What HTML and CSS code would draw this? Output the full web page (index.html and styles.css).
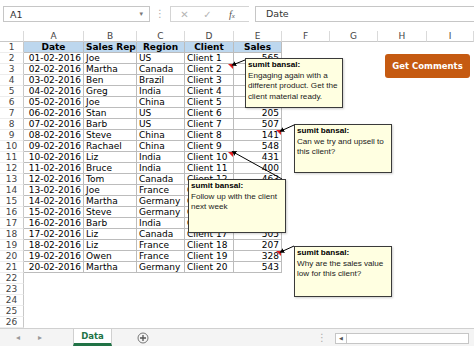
FILE: index.html
```html
<!DOCTYPE html>
<html lang="en">

<head>
    <meta charset="UTF-8">
    <title>Sales Comments</title>
    <link rel="stylesheet" href="styles.css">
</head>

<body>
    <div class="app">
        <!-- Formula bar -->
        <div class="formula-bar">
            <div class="name-box"><span>A1</span><span class="caret">&#9662;</span></div>
            <span class="grip">&#8942;</span>
            <div class="fx-tools">
                <span class="tool">&#10005;</span>
                <span class="tool">&#10003;</span>
                <span class="fx">f<small>x</small></span>
            </div>
            <div class="formula-input">Date</div>
        </div>

        <!-- Sheet grid -->
        <div class="sheet">
            <div class="row head">
                <div class="corner"></div>
                <div class="col">A</div><div class="col">B</div><div class="col">C</div><div class="col">D</div>
                <div class="col">E</div><div class="col">F</div><div class="col">G</div><div class="col">H</div>
                <div class="col">I</div>
            </div>
            <div class="row">
                <div class="rn">1</div>
                <div class="c th">Date</div><div class="c th">Sales Rep</div><div class="c th">Region</div>
                <div class="c th">Client</div><div class="c th">Sales</div>
            </div>
            <div class="row"><div class="rn">2</div><div class="c num">01-02-2016</div><div class="c">Joe</div><div class="c">US</div><div class="c">Client 1</div><div class="c num">565</div></div>
            <div class="row"><div class="rn">3</div><div class="c num">02-02-2016</div><div class="c">Martha</div><div class="c">Canada</div><div class="c note">Client 2</div><div class="c num">320</div></div>
            <div class="row"><div class="rn">4</div><div class="c num">03-02-2016</div><div class="c">Ben</div><div class="c">Brazil</div><div class="c">Client 3</div><div class="c num">478</div></div>
            <div class="row"><div class="rn">5</div><div class="c num">04-02-2016</div><div class="c">Greg</div><div class="c">India</div><div class="c">Client 4</div><div class="c num">390</div></div>
            <div class="row"><div class="rn">6</div><div class="c num">05-02-2016</div><div class="c">Joe</div><div class="c">China</div><div class="c">Client 5</div><div class="c num">512</div></div>
            <div class="row"><div class="rn">7</div><div class="c num">06-02-2016</div><div class="c">Stan</div><div class="c">US</div><div class="c">Client 6</div><div class="c num">205</div></div>
            <div class="row"><div class="rn">8</div><div class="c num">07-02-2016</div><div class="c">Barb</div><div class="c">US</div><div class="c">Client 7</div><div class="c num">507</div></div>
            <div class="row"><div class="rn">9</div><div class="c num">08-02-2016</div><div class="c">Steve</div><div class="c">China</div><div class="c">Client 8</div><div class="c num note">141</div></div>
            <div class="row"><div class="rn">10</div><div class="c num">09-02-2016</div><div class="c">Rachael</div><div class="c">China</div><div class="c">Client 9</div><div class="c num">548</div></div>
            <div class="row"><div class="rn">11</div><div class="c num">10-02-2016</div><div class="c">Liz</div><div class="c">India</div><div class="c note">Client 10</div><div class="c num">431</div></div>
            <div class="row"><div class="rn">12</div><div class="c num">11-02-2016</div><div class="c">Bruce</div><div class="c">India</div><div class="c">Client 11</div><div class="c num">400</div></div>
            <div class="row"><div class="rn">13</div><div class="c num">12-02-2016</div><div class="c">Tom</div><div class="c">Canada</div><div class="c">Client 12</div><div class="c num">463</div></div>
            <div class="row"><div class="rn">14</div><div class="c num">13-02-2016</div><div class="c">Joe</div><div class="c">France</div><div class="c">Client 13</div><div class="c num">288</div></div>
            <div class="row"><div class="rn">15</div><div class="c num">14-02-2016</div><div class="c">Martha</div><div class="c">Germany</div><div class="c">Client 14</div><div class="c num">376</div></div>
            <div class="row"><div class="rn">16</div><div class="c num">15-02-2016</div><div class="c">Steve</div><div class="c">Germany</div><div class="c">Client 15</div><div class="c num">419</div></div>
            <div class="row"><div class="rn">17</div><div class="c num">16-02-2016</div><div class="c">Barb</div><div class="c">India</div><div class="c">Client 16</div><div class="c num">352</div></div>
            <div class="row"><div class="rn">18</div><div class="c num">17-02-2016</div><div class="c">Liz</div><div class="c">Canada</div><div class="c">Client 17</div><div class="c num">505</div></div>
            <div class="row"><div class="rn">19</div><div class="c num">18-02-2016</div><div class="c">Liz</div><div class="c">France</div><div class="c">Client 18</div><div class="c num">207</div></div>
            <div class="row"><div class="rn">20</div><div class="c num">19-02-2016</div><div class="c">Owen</div><div class="c">France</div><div class="c">Client 19</div><div class="c num note">328</div></div>
            <div class="row"><div class="rn">21</div><div class="c num">20-02-2016</div><div class="c">Martha</div><div class="c">Germany</div><div class="c">Client 20</div><div class="c num">543</div></div>
            <div class="row"><div class="rn">22</div></div>
            <div class="row"><div class="rn">23</div></div>
            <div class="row"><div class="rn">24</div></div>
            <div class="row"><div class="rn">25</div></div>
            <div class="row"><div class="rn">26</div></div>
        </div>

        <!-- Sheet tabs -->
        <div class="tab-bar">
            <span class="nav">&#9666;</span>
            <span class="nav">&#9656;</span>
            <div class="tab">Data</div>
            <svg class="add-sheet" width="12" height="12" viewBox="0 0 12 12">
                <circle cx="6" cy="6" r="5" fill="none" stroke="#777" stroke-width="1"/>
                <path d="M6 3v6M3 6h6" stroke="#555" stroke-width="1.3"/>
            </svg>
            <span class="tab-grip">&#8942;</span>
            <div class="hscroll"><span class="hs-arrow">&#9664;</span></div>
        </div>

        <!-- Comment arrows -->
        <svg class="arrows" width="474" height="346">
            <defs>
                <marker id="head" markerWidth="5" markerHeight="5" refX="1" refY="2.5" orient="auto-start-reverse">
                    <path d="M0 0L5 2.5L0 5z" fill="#000"/>
                </marker>
            </defs>
            <line x1="235" y1="64" x2="245" y2="60" marker-start="url(#head)"/>
            <line x1="283" y1="130" x2="294" y2="125" marker-start="url(#head)"/>
            <line x1="235" y1="153" x2="282" y2="179" marker-start="url(#head)"/>
            <line x1="283" y1="251" x2="294" y2="246" marker-start="url(#head)"/>
        </svg>

        <button class="get-comments">Get Comments</button>

        <div class="comment c1"><b>sumit bansal:</b><br>Engaging again with a different product. Get the client material ready.</div>
        <div class="comment c2"><b>sumit bansal:</b><br>Can we try and upsell to this client?</div>
        <div class="comment c3"><b>sumit bansal:</b><br>Follow up with the client next week</div>
        <div class="comment c4"><b>sumit bansal:</b><br>Why are the sales value low for this client?</div>
    </div>
</body>

</html>
```

FILE: styles.css
```css
body {
    margin: 0;
    background-color: #fff;
    font-family: "DejaVu Sans", Verdana, sans-serif;
    overflow: hidden;
}

.app {
    position: relative;
    width: 474px;
    height: 346px;
}

/* Formula bar */
.formula-bar {
    display: flex;
    align-items: flex-start;
    height: 31px;
    padding-top: 6px;
    box-sizing: border-box;
    font-size: 9.5px;
    color: #333;
}

.name-box {
    display: flex;
    align-items: center;
    justify-content: space-between;
    width: 147px;
    height: 16px;
    margin-left: 3px;
    padding: 0 6px;
    box-sizing: border-box;
    border: 1px solid #c6c6c6;
}

.name-box .caret {
    font-size: 7px;
    color: #777;
}

.grip {
    width: 20px;
    text-align: center;
    color: #aaa;
    font-size: 10px;
    line-height: 16px;
}

.fx-tools {
    display: flex;
    align-items: center;
    width: 79px;
    height: 16px;
    box-sizing: border-box;
    border: 1px solid #d4d4d4;
    border-right: none;
}

.fx-tools .tool {
    width: 19px;
    margin-left: 4px;
    text-align: center;
    color: #b5b5b5;
    font-size: 10px;
}

.fx-tools .fx {
    margin-left: 12px;
    font-family: "Liberation Serif", serif;
    font-style: italic;
    font-size: 10px;
    color: #555;
}

.fx-tools .fx small {
    font-size: 7px;
}

.formula-input {
    flex: 1;
    height: 16px;
    margin-left: 6px;
    padding-left: 10px;
    box-sizing: border-box;
    border: 1px solid #c6c6c6;
    border-right: none;
    line-height: 14px;
}

/* Sheet */
.sheet {
    font-size: 9px;
    color: #000;
}

.row {
    display: grid;
    grid-template-columns: 24px 60px 53px 48px 49px 48px 48px 48px 49px 47px;
    height: 11px;
}

.row > div {
    box-sizing: border-box;
    line-height: 10px;
    white-space: nowrap;
    overflow: hidden;
}

.head .col,
.head .corner {
    text-align: center;
    color: #444;
    border-right: 1px solid #dadada;
    border-bottom: 1px solid #c8c8c8;
}

.rn {
    text-align: center;
    color: #444;
    border-right: 1px solid #c8c8c8;
    border-bottom: 1px solid #ededed;
}

.c {
    padding: 0 2px;
    border-right: 1px solid #bcbcbc;
    border-bottom: 1px solid #bcbcbc;
}

.c.th {
    background-color: #bdd7ee;
    font-weight: bold;
    text-align: center;
}

.c.num {
    text-align: right;
}

/* Red comment marker */
.c.note {
    position: relative;
}

.c.note::after {
    content: "";
    position: absolute;
    top: 0;
    right: 0;
    border-top: 5px solid #e02020;
    border-left: 5px solid transparent;
}

/* Sheet tabs */
.tab-bar {
    display: flex;
    align-items: stretch;
    height: 18px;
    box-sizing: border-box;
    border-top: 1px solid #d0d0d0;
    background-color: #f4f4f4;
    font-size: 8px;
    color: #999;
}

.tab-bar .nav {
    width: 12px;
    margin-left: 12px;
    line-height: 17px;
    text-align: center;
}

.tab-bar .nav + .nav {
    margin-left: 10px;
}

.tab {
    width: 39px;
    margin-left: 27px;
    background-color: #fff;
    border-left: 1px solid #d0d0d0;
    border-right: 1px solid #d0d0d0;
    border-bottom: 3px solid #217346;
    box-sizing: border-box;
    text-align: center;
    line-height: 15px;
    font-size: 8.5px;
    font-weight: bold;
    color: #217346;
}

.add-sheet {
    margin: 3px 0 0 25px;
}

.tab-grip {
    margin-left: 168px;
    line-height: 17px;
    color: #aaa;
    font-size: 10px;
}

.hscroll {
    width: 134px;
    height: 11px;
    margin: 4px 0 0 8px;
    box-sizing: border-box;
    border: 1px solid #c6c6c6;
    background-color: #fff;
}

.hs-arrow {
    display: block;
    width: 10px;
    height: 9px;
    border-right: 1px solid #c6c6c6;
    font-size: 5px;
    line-height: 9px;
    text-align: center;
    color: #555;
}

/* Overlays */
.arrows {
    position: absolute;
    top: 0;
    left: 0;
    pointer-events: none;
}

.arrows line {
    stroke: #000;
    stroke-width: 1;
}

.get-comments {
    position: absolute;
    top: 54px;
    left: 385px;
    width: 85px;
    height: 24px;
    border: none;
    border-radius: 3px;
    background-color: #c55a11;
    color: #fff;
    font-family: "DejaVu Sans", Verdana, sans-serif;
    font-size: 8.5px;
    font-weight: bold;
    padding: 0;
}

.comment {
    position: absolute;
    width: 98px;
    box-sizing: border-box;
    padding: 1px 2px;
    background-color: #ffffe1;
    border: 1px solid #3a3a3a;
    box-shadow: 1px 1px 2px rgba(0, 0, 0, 0.2);
    font-family: "Liberation Sans", Arial, sans-serif;
    font-size: 8.1px;
    line-height: 10.5px;
    color: #1a1a1a;
}

.comment b {
    color: #000;
}

.c1 { top: 58px; left: 245px; height: 50px; }
.c2 { top: 124px; left: 294px; height: 49px; }
.c3 { top: 179px; left: 188px; height: 54px; }
.c4 { top: 246px; left: 294px; height: 51px; }
```
